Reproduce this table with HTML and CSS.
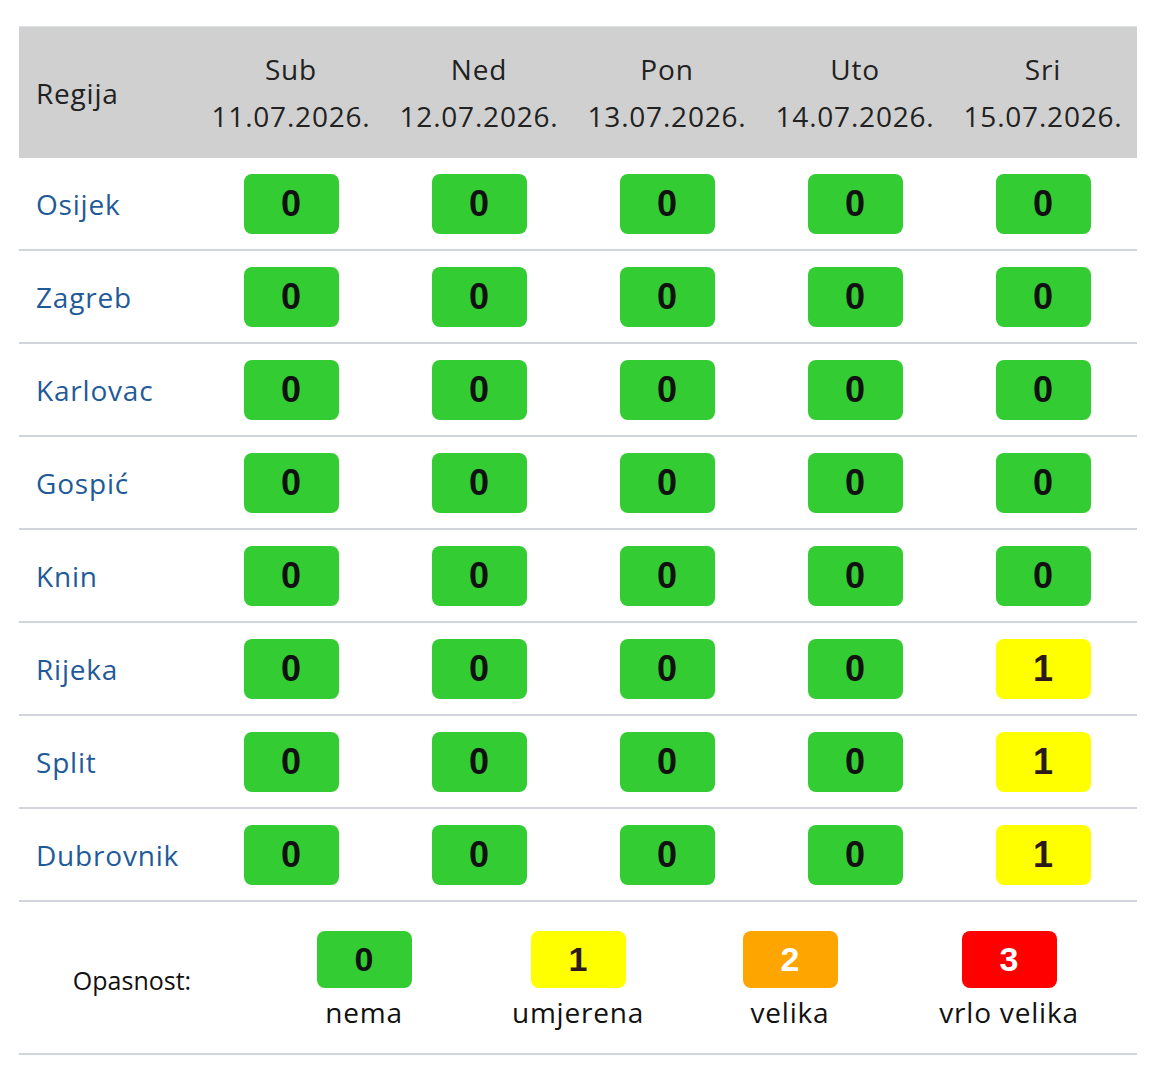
FILE: index.html
```html
<!DOCTYPE html>
<html lang="hr">
<head>
<meta charset="utf-8">
<title>Opasnost</title>
<link rel="stylesheet" href="styles.css">
</head>
<body>
<div class="wrap">
<table class="fire">
  <colgroup><col class="c-name"><col class="c-day"><col class="c-day"><col class="c-day"><col class="c-day"><col class="c-day"></colgroup>
  <thead>
    <tr>
      <th class="th-name">Regija</th>
      <th>Sub<br>11.07.2026.</th>
      <th>Ned<br>12.07.2026.</th>
      <th>Pon<br>13.07.2026.</th>
      <th>Uto<br>14.07.2026.</th>
      <th>Sri<br>15.07.2026.</th>
    </tr>
  </thead>
  <tbody>
    <tr><td class="name">Osijek</td><td><span class="b l0">0</span></td><td><span class="b l0">0</span></td><td><span class="b l0">0</span></td><td><span class="b l0">0</span></td><td><span class="b l0">0</span></td></tr>
    <tr><td class="name">Zagreb</td><td><span class="b l0">0</span></td><td><span class="b l0">0</span></td><td><span class="b l0">0</span></td><td><span class="b l0">0</span></td><td><span class="b l0">0</span></td></tr>
    <tr><td class="name">Karlovac</td><td><span class="b l0">0</span></td><td><span class="b l0">0</span></td><td><span class="b l0">0</span></td><td><span class="b l0">0</span></td><td><span class="b l0">0</span></td></tr>
    <tr><td class="name">Gospić</td><td><span class="b l0">0</span></td><td><span class="b l0">0</span></td><td><span class="b l0">0</span></td><td><span class="b l0">0</span></td><td><span class="b l0">0</span></td></tr>
    <tr><td class="name">Knin</td><td><span class="b l0">0</span></td><td><span class="b l0">0</span></td><td><span class="b l0">0</span></td><td><span class="b l0">0</span></td><td><span class="b l0">0</span></td></tr>
    <tr><td class="name">Rijeka</td><td><span class="b l0">0</span></td><td><span class="b l0">0</span></td><td><span class="b l0">0</span></td><td><span class="b l0">0</span></td><td><span class="b l1">1</span></td></tr>
    <tr><td class="name">Split</td><td><span class="b l0">0</span></td><td><span class="b l0">0</span></td><td><span class="b l0">0</span></td><td><span class="b l0">0</span></td><td><span class="b l1">1</span></td></tr>
    <tr><td class="name">Dubrovnik</td><td><span class="b l0">0</span></td><td><span class="b l0">0</span></td><td><span class="b l0">0</span></td><td><span class="b l0">0</span></td><td><span class="b l1">1</span></td></tr>
  </tbody>
  <tfoot>
    <tr>
      <td colspan="6" class="legend-cell">
        <div class="legend">
          <div class="lg-title">Opasnost:</div>
          <div class="lg-item"><span class="b lb l0">0</span><span class="lg-label">nema</span></div>
          <div class="lg-item"><span class="b lb l1">1</span><span class="lg-label">umjerena</span></div>
          <div class="lg-item"><span class="b lb l2">2</span><span class="lg-label">velika</span></div>
          <div class="lg-item"><span class="b lb l3">3</span><span class="lg-label">vrlo velika</span></div>
        </div>
      </td>
    </tr>
  </tfoot>
</table>
</div>
</body>
</html>
```

FILE: styles.css
```css
html, body {
  margin: 0;
  padding: 0;
  background: #ffffff;
}
.wrap {
  padding: 26px 0 0 19px;
}
.fire {
  width: 1118px;
  border-collapse: collapse;
  table-layout: fixed;
  font-family: "Open Sans", "Noto Sans", sans-serif;
  font-size: 28px;
  letter-spacing: 0.8px;
  color: #222222;
}
.c-name { width: 178px; }
.c-day { width: 188px; }

.fire thead tr {
  background: #d0d0d0;
}
.fire th {
  font-weight: normal;
  text-align: center;
  line-height: 47px;
  padding: 19px 0 18px 0;
  height: 94px;
  border-top: 1px solid #dde2e8;
  white-space: nowrap;
  color: #222222;
}
.fire th.th-name {
  text-align: left;
  padding-left: 17px;
}
.fire tbody td {
  height: 91px;
  padding: 0;
  text-align: center;
  vertical-align: middle;
  border-bottom: 2px solid #d2d6dc;
}
.fire tbody td.name {
  text-align: left;
  padding-left: 17px;
  color: #1f5b98;
}
.b {
  display: inline-block;
  width: 95px;
  height: 60px;
  line-height: 60px;
  border-radius: 8px;
  font-family: "Liberation Sans", Arial, sans-serif;
  font-weight: bold;
  font-size: 36px;
  letter-spacing: 0;
  color: #111111;
  text-align: center;
  vertical-align: middle;
}
.l0 { background: #33cc33; }
.l1 { background: #ffff00; color: #2a1a1a; }
.l2 { background: #ffa500; color: #ffffff; }
.l3 { background: #ff0000; color: #ffffff; }

.legend-cell {
  padding: 0;
  height: 151px;
  border-bottom: 2px solid #d2d6dc;
}
.legend {
  display: grid;
  grid-template-columns: 226px 238px 190px 234px 204px 1fr;
  align-items: center;
  height: 151px;
}
.lg-title {
  text-align: center;
  color: #111111;
  font-size: 25px;
  letter-spacing: 0;
  padding-top: 4px;
}
.lg-item {
  display: flex;
  flex-direction: column;
  align-items: center;
  padding-top: 6px;
}
.lb {
  height: 57px;
  line-height: 57px;
  font-size: 34px;
}
.lg-label {
  margin-top: 6px;
  line-height: 36px;
  color: #111111;
}
```
